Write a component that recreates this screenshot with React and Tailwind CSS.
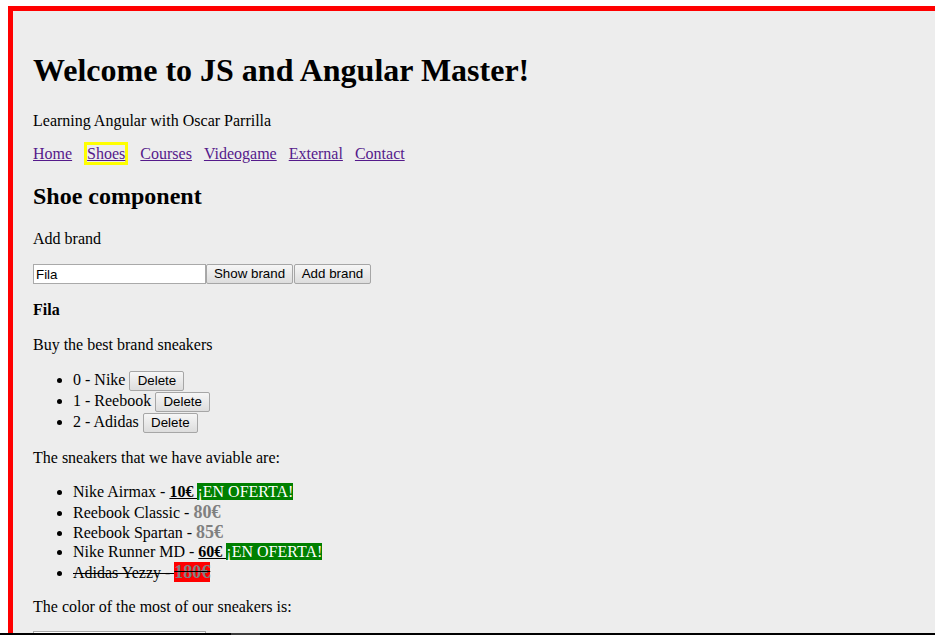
import React from "react";

const serif = { fontFamily: '"Liberation Serif", "Times New Roman", serif' };

function Btn({ children, w }) {
  return (
    <button
      className={`h-[20px] ${w} border border-[#a6a6a6] rounded-[2px] bg-gradient-to-b from-[#f6f6f6] to-[#dddddd] text-[13.33px] leading-[16px] text-black px-[6px] align-middle`}
      style={{ fontFamily: '"Liberation Sans", Arial, sans-serif' }}
    >
      {children}
    </button>
  );
}

export default function App() {
  return (
    <div className="relative w-[935px] h-[635px] overflow-hidden bg-white pt-[6px] pl-[8px]" style={serif}>
      <div className="w-[1000px] h-[1000px] border-l-[5px] border-t-[5px] border-[#ff0000] bg-[#ededed] pl-[20px] pt-[41px] text-black text-[16px]">
        <h1 className="text-[32px] leading-[37px] font-bold">Welcome to JS and Angular Master!</h1>
        <p className="mt-[23px] leading-[18px]">Learning Angular with Oscar Parrilla</p>
        <nav className="mt-[12px] h-[23px] flex items-center gap-[12px] text-[#551a8b] leading-[17px]">
          <a className="underline">Home</a>
          <a className="underline border-[3px] border-[#ffff00]">Shoes</a>
          <a className="underline">Courses</a>
          <a className="underline">Videogame</a>
          <a className="underline">External</a>
          <a className="underline">Contact</a>
        </nav>
        <h2 className="mt-[17px] text-[24px] leading-[28px] font-bold">Shoe component</h2>
        <p className="mt-[20px] leading-[18px]">Add brand</p>
        <div className="mt-[16px] h-[20px] flex">
          <input
            readOnly
            value="Fila"
            className="w-[173px] h-[20px] border border-[#a9a9a9] bg-white px-[2px] text-[13.33px] text-black outline-none"
            style={{ fontFamily: '"Liberation Sans", Arial, sans-serif' }}
          />
          <Btn w="w-[87px]">Show brand</Btn>
          <span className="w-[1px]" />
          <Btn w="w-[77px]">Add brand</Btn>
        </div>
        <p className="mt-[17px] leading-[18px] font-bold">Fila</p>
        <p className="mt-[17px] leading-[18px]">Buy the best brand sneakers</p>
        <ul className="mt-[15px] list-disc pl-[40px]">
          {["0 - Nike", "1 - Reebook", "2 - Adidas"].map((t) => (
            <li key={t} className="h-[21px] leading-[21px]">
              {t}{" "}
              <Btn w="w-[55px]">Delete</Btn>
            </li>
          ))}
        </ul>
        <p className="mt-[17px] leading-[18px]">The sneakers that we have aviable are:</p>
        <ul className="mt-[15px] list-disc pl-[40px]">
          <li className="h-[20px] leading-[20px]">
            Nike Airmax - <b className="underline">10€ </b>
            <span className="bg-[#008000] text-white">¡EN OFERTA!</span>
          </li>
          <li className="h-[20px] leading-[20px]">
            Reebook Classic - <b className="text-[18px] text-[#808080]">80€</b>
          </li>
          <li className="h-[20px] leading-[20px]">
            Reebook Spartan - <b className="text-[18px] text-[#808080]">85€</b>
          </li>
          <li className="h-[20px] leading-[20px]">
            Nike Runner MD - <b className="underline">60€ </b>
            <span className="bg-[#008000] text-white">¡EN OFERTA!</span>
          </li>
          <li className="h-[20px] leading-[20px] line-through">
            Adidas Yezzy - <b className="text-[18px] text-[#808080] bg-[#ff0000]">180€</b>
          </li>
        </ul>
        <p className="mt-[16px] leading-[18px]">The color of the most of our sneakers is:</p>
        <div className="mt-[15px] w-[173px] h-[20px] border border-[#a9a9a9] bg-white" />
      </div>
      <div className="absolute left-0 bottom-0 w-[935px] h-[2px] bg-black flex">
        <div className="ml-[231px] w-[29px] h-[2px] bg-[#3b3b3b]" />
      </div>
    </div>
  );
}
